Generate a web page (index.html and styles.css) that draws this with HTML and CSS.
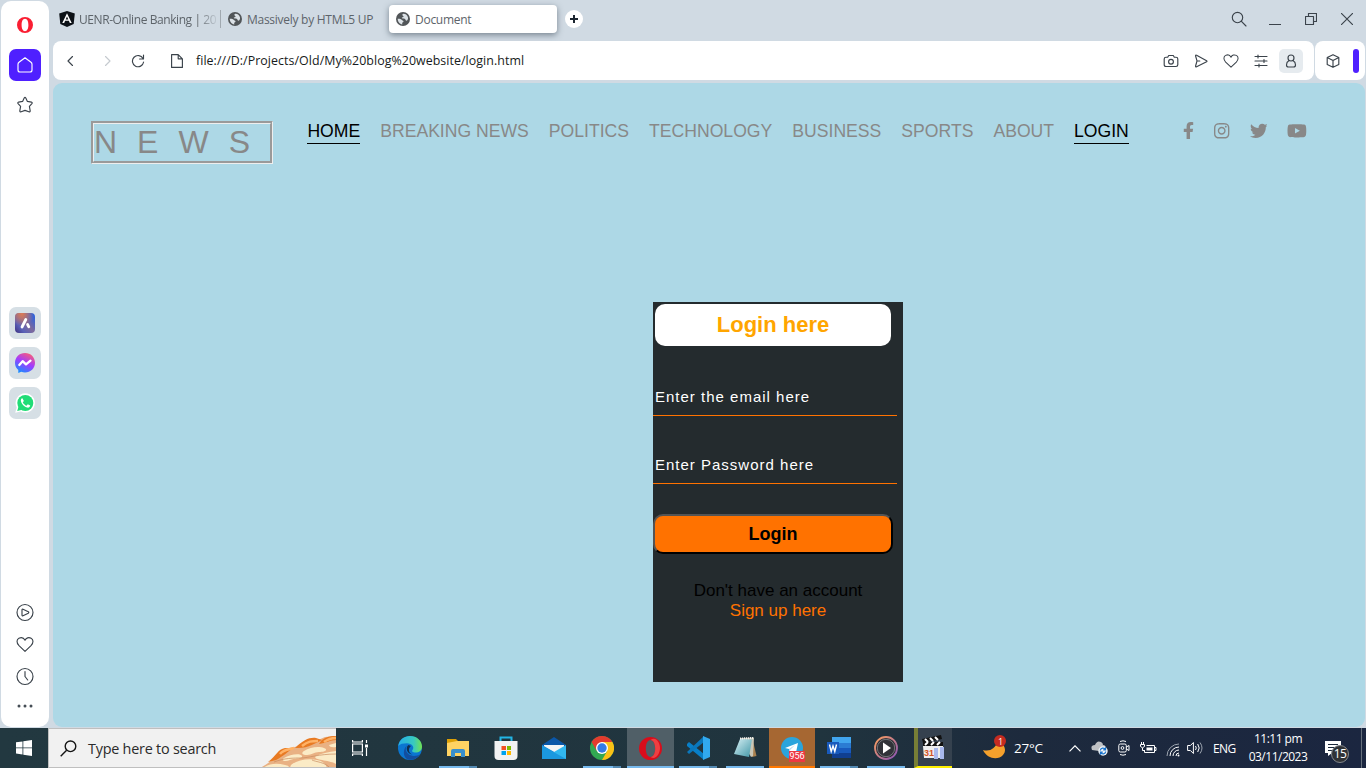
FILE: index.html
```html
<!DOCTYPE html>
<html lang="en">
<head>
<meta charset="utf-8">
<title>Document</title>
<link rel="stylesheet" href="styles.css">
</head>
<body>
<svg class="defs" width="0" height="0" aria-hidden="true">
  <symbol id="globe" viewBox="0 0 14 14"><circle cx="7" cy="7" r="7" fill="#515558"/><path d="M7.200 1.800C6 2.200 6.200 3.600 7.200 3.900c.8.300.2 1.300-.7 1.400-1 .1-.9 1.200.2 1.300 1.500 0 2.700.3 2.900 1.300.3 1.100 1.300.9 1.900.1.500-.8.700-1.700.5-2.600C11.500 3.400 9.700 1.700 7.200 1.800z" fill="#dce2e7"/><path d="M1.700 6.800c1.700-.1 3.500.3 4.300 1.200.6.800 1.700.7 1.500 1.600-.2.800-1 .7-1.300 1.400-.2.600.3 1 .1 1.500C3.600 12.200 1.700 9.800 1.700 6.800z" fill="#dce2e7"/></symbol>
  <symbol id="heart" viewBox="0 0 18 18"><path d="M9 15.900 3 10.200C.2 7.400.6 3.800 2.900 2.700 5.300 1.500 7.800 2.300 9 4.700c1.200-2.400 3.700-3.200 6.100-2C17.400 3.800 17.800 7.400 15 10.200z"/></symbol>
</svg>

<div class="browser">
  <aside class="sidebar">
    <svg class="opera" width="16" height="16" viewBox="0 0 16 16"><path fill="#fa1e32" fill-rule="evenodd" d="M8 0a8 8 0 1 0 0 16A8 8 0 1 0 8 0zm0 1.800c2.300 0 3.400 2.900 3.400 6.200S10.300 14.200 8 14.200 4.600 11.300 4.600 8 5.700 1.800 8 1.800z"/></svg>
    <span class="side-home"><svg class="line" width="18" height="18" viewBox="0 0 18 18"><path d="M9 1.800 3 6.200q-1 .8-1 2V14q0 2 2 2h10q2 0 2-2V8.200q0-1.200-1-2z"/></svg></span>
    <svg class="line star" width="18" height="18" viewBox="0 0 18 18"><path d="M8.200 2q.8-1.200 1.600 0l1.600 3.400 4 .7q1.300.4.500 1.500l-2.500 2.800.8 4.400q0 1.500-1.400 1L9 14.400l-3.800 1.400q-1.400.5-1.400-1l.8-4.400-2.500-2.800q-.8-1.100.5-1.500l4-.7z"/></svg>
    <div class="side-apps">
      <span class="side-app"><svg width="20" height="20" viewBox="0 0 20 20"><defs><linearGradient id="ga" x1="1" y1=".2" x2="0" y2="1"><stop offset="0" stop-color="#2f62dc"/><stop offset=".4" stop-color="#7d6a9d"/><stop offset=".7" stop-color="#5a62b8"/><stop offset="1" stop-color="#3e2f80"/></linearGradient><radialGradient id="gb" cx=".35" cy=".05" r=".6"><stop stop-color="#dc7a54"/><stop offset="1" stop-color="#dc7a54" stop-opacity="0"/></radialGradient></defs><rect width="20" height="20" rx="4" fill="url(#ga)"/><rect width="20" height="20" rx="4" fill="url(#gb)"/><path d="M7 14 10.800 6.500M12.600 11.500l1.200 2.300" stroke="#fff" stroke-width="2.800" stroke-linecap="round"/></svg></span>
      <span class="side-app"><svg width="20" height="20" viewBox="0 0 20 20"><defs><linearGradient id="gm" x1=".3" y1="1" x2=".8" y2="0"><stop offset="0" stop-color="#168dff"/><stop offset=".5" stop-color="#a23cff"/><stop offset="1" stop-color="#ff606e"/></linearGradient></defs><path d="M10 0C4.300 0 0 4.200 0 9.800c0 3 1.300 5.600 3.300 7.300V20l2.900-1.200c1.200.4 2.400.6 3.800.6 5.700 0 10-4 10-9.600S15.700 0 10 0z" fill="url(#gm)"/><path d="m4.300 12 3.300-3.800 3.400 3.200 4.500-3.700" fill="none" stroke="#fff" stroke-width="2.300" stroke-linejoin="round" stroke-linecap="round"/></svg></span>
      <span class="side-app"><svg width="20" height="20" viewBox="0 0 20 20"><path d="M10.300.2a9.700 9.700 0 0 0-8.600 14.300L.2 19.800l5.500-1.300A9.700 9.700 0 1 0 10.300.2z" fill="#fff"/><circle cx="10.300" cy="10" r="8" fill="#20dc76"/><path d="m2.200 18 1.400-4.800 3.600 3.600z" fill="#20dc76"/><path d="M7.400 5.200c-1.200.2-1.800 1.500-1.500 2.900.6 3.100 3.500 6 6.500 6.500 1.500.2 2.700-.7 2.800-2.100l-2.400-1.200-1.300 1.400c-1.700-.6-3-1.900-3.700-3.500l1.100-1.300z" fill="#fff"/></svg></span>
    </div>
    <div class="side-tools">
      <svg class="line" width="18" height="18" viewBox="0 0 18 18"><circle cx="9" cy="9" r="8"/><path d="M6 6.500q0-1 1-.8l5.300 2.600q1 .7 0 1.400L7 12.300q-1 .2-1-.8z"/></svg>
      <svg class="line" width="18" height="18"><use href="#heart"/></svg>
      <svg class="line" width="18" height="18" viewBox="0 0 18 18"><circle cx="9" cy="9" r="8"/><path d="M9 4v5l2.700 3.500"/></svg>
      <svg class="dots" width="18" height="10" viewBox="0 0 18 10"><circle cx="3" cy="5" r="1.500"/><circle cx="9" cy="5" r="1.500"/><circle cx="15" cy="5" r="1.500"/></svg>
    </div>
  </aside>

  <div class="window">
    <div class="tabs">
      <div class="tab tab-first"><svg width="16" height="16" viewBox="0 0 16 16"><path d="M8 0 .2 2.600 1.300 13 8 16l6.700-3 1.100-10.400z" fill="#0c1117"/><path d="M8 2.200 3.300 12h1.900l.9-2.200h3.800l.9 2.200h1.900zm0 3.400 1.300 2.900H6.700z" fill="#fff"/></svg><span class="tab-text fade">UENR-Online Banking | 20</span></div>
      <div class="tab tab-second"><svg width="14" height="14"><use href="#globe"/></svg><span class="tab-text">Massively by HTML5 UP</span></div>
      <div class="tab tab-active"><svg width="14" height="14"><use href="#globe"/></svg><span class="tab-text">Document</span></div>
      <span class="new-tab"><svg width="8" height="8" viewBox="0 0 8 8"><path d="M4 0v8M0 4h8" stroke="#1c2630" stroke-width="2"/></svg></span>
      <div class="window-controls">
        <svg class="line" width="16" height="16" viewBox="0 0 16 16"><circle cx="6.500" cy="6.500" r="5.200"/><path d="m10.200 10.200 4.800 4.800"/></svg>
        <svg class="line" width="12" height="14" viewBox="0 0 12 14"><path d="M0 12.500h12"/></svg>
        <svg class="line" width="12" height="12" viewBox="0 0 12 12"><path d="M.5 3.500h8v8h-8zM3.500 3.500v-3h8v8h-3"/></svg>
        <svg class="line" width="12" height="12" viewBox="0 0 12 12"><path d="m.3.300 11.400 11.400M11.700.3.300 11.700"/></svg>
      </div>
    </div>

    <div class="bars">
      <div class="address">
        <svg class="line back" width="8" height="12" viewBox="0 0 8 12"><path d="M6.500 1.500 2 6l4.500 4.500"/></svg>
        <svg class="line forward" width="8" height="12" viewBox="0 0 8 12"><path d="m1.500 1.500 4.500 4.500-4.500 4.500"/></svg>
        <svg class="line reload" width="14" height="14" viewBox="0 0 14 14"><path d="M12 4.500A5.600 5.600 0 1 0 12.600 8M12.500 1v4H8.600"/></svg>
        <svg class="line file" width="12" height="14" viewBox="0 0 12 14"><path d="M.6.600h6.600l4.200 4.200v8.600H.600zM7.200.600v4.200h4.200"/></svg>
        <span class="url">file:///D:/Projects/Old/My%20blog%20website/login.html</span>
        <div class="actions">
          <svg class="line" width="16" height="16" viewBox="0 0 16 16"><path d="M3 4.200h1.700l1-1.700h4.600l1 1.700H13q1.800 0 1.800 1.800v5.800q0 1.700-1.800 1.700H3q-1.800 0-1.800-1.700V6q0-1.800 1.800-1.800z"/><circle cx="8" cy="8.700" r="2.400"/></svg>
          <svg class="line" width="16" height="16" viewBox="0 0 16 16"><path d="M3.600 2.300q-1.300-.5-1 .7L4 7.800l-1.400 5.200q-.3 1.300 1 .7l10-5q.8-.5 0-1zM4.200 8h2.600"/></svg>
          <svg class="line" width="16" height="16"><use href="#heart"/></svg>
          <svg class="line" width="16" height="16" viewBox="0 0 16 16"><path d="M2 3.500h12M2 8h12M2 12.500h12M5 2v3M11 6.500v3M6 11v3"/></svg>
          <span class="profile"><svg class="line" width="16" height="16" viewBox="0 0 16 16"><circle cx="8" cy="5" r="3"/><path d="M5.800 7.800Q3.500 9 3.500 12q0 2 2 2h5q2 0 2-2 0-3-2.300-4.200"/></svg></span>
        </div>
      </div>
      <div class="extension">
        <svg class="line" width="14" height="14" viewBox="0 0 14 14"><path d="M7 .7 12.800 3.500v7L7 13.300l-5.800-2.800v-7zM1.200 3.500 7 6.400l5.800-2.900M7 6.400v6.900"/></svg>
        <span class="accent"></span>
      </div>
    </div>

    <main class="page">
      <header class="header">
        <div class="brand">NEWS</div>
        <nav class="nav">
          <a class="current">HOME</a><a>BREAKING NEWS</a><a>POLITICS</a><a>TECHNOLOGY</a><a>BUSINESS</a><a>SPORTS</a><a>ABOUT</a><a class="current">LOGIN</a>
        </nav>
        <div class="social">
          <svg class="fb" viewBox="0 0 320 512"><path d="M279.140 288l14.220-92.660h-88.910v-60.130c0-25.350 12.420-50.060 52.240-50.060h40.420V6.260S260.430 0 225.360 0c-73.220 0-121.080 44.380-121.080 124.720v70.620H22.890V288h81.390v224h100.170V288z"/></svg>
          <svg class="ig" viewBox="0 0 448 512"><path d="M224.1 141c-63.6 0-114.9 51.3-114.9 114.9s51.3 114.9 114.9 114.9S339 319.5 339 255.9 287.7 141 224.1 141zm0 189.6c-41.1 0-74.7-33.5-74.7-74.7s33.5-74.7 74.7-74.7 74.7 33.5 74.7 74.7-33.6 74.7-74.7 74.7zm146.400-194.300c0 14.900-12 26.800-26.800 26.800-14.900 0-26.800-12-26.800-26.800s12-26.800 26.800-26.800 26.800 12 26.800 26.800zm76.100 27.200c-1.700-35.900-9.900-67.700-36.200-93.900-26.200-26.200-58-34.400-93.900-36.200-37-2.100-147.900-2.100-184.900 0-35.800 1.700-67.600 9.900-93.900 36.100s-34.400 58-36.200 93.900c-2.100 37-2.100 147.900 0 184.900 1.700 35.900 9.900 67.700 36.200 93.900s58 34.400 93.900 36.200c37 2.100 147.900 2.100 184.900 0 35.900-1.700 67.700-9.900 93.900-36.200 26.200-26.200 34.400-58 36.200-93.900 2.100-37 2.100-147.800 0-184.800zM398.800 388c-7.800 19.600-22.900 34.700-42.600 42.600-29.500 11.700-99.500 9-132.100 9s-102.700 2.600-132.100-9c-19.600-7.800-34.700-22.900-42.600-42.600-11.700-29.500-9-99.500-9-132.100s-2.600-102.700 9-132.100c7.800-19.600 22.900-34.700 42.600-42.600 29.500-11.700 99.500-9 132.100-9s102.700-2.600 132.100 9c19.600 7.800 34.700 22.900 42.600 42.600 11.700 29.500 9 99.500 9 132.100s2.700 102.700-9 132.100z"/></svg>
          <svg class="tw" viewBox="0 0 512 512"><path d="M459.370 151.716c.325 4.548.325 9.097.325 13.645 0 138.720-105.583 298.558-298.558 298.558-59.452 0-114.680-17.219-161.137-47.106 8.447.974 16.568 1.299 25.340 1.299 49.055 0 94.213-16.568 130.274-44.832-46.132-.975-84.792-31.188-98.112-72.772 6.498.974 12.995 1.624 19.818 1.624 9.421 0 18.843-1.300 27.614-3.573-48.081-9.747-84.143-51.980-84.143-102.985v-1.299c13.969 7.797 30.214 12.670 47.431 13.319-28.264-18.843-46.781-51.005-46.781-87.391 0-19.492 5.197-37.360 14.294-52.954 51.655 63.675 129.300 105.258 216.365 109.807-1.624-7.797-2.599-15.918-2.599-24.040 0-57.828 46.782-104.934 104.934-104.934 30.213 0 57.502 12.670 76.670 33.137 23.715-4.548 46.456-13.320 66.599-25.340-7.798 24.366-24.366 44.833-46.132 57.827 21.117-2.273 41.584-8.122 60.426-16.243-14.292 20.791-32.161 39.308-52.628 54.253z"/></svg>
          <svg class="yt" viewBox="0 0 576 512"><path d="M549.655 124.083c-6.281-23.650-24.787-42.276-48.284-48.597C458.781 64 288 64 288 64S117.220 64 74.629 75.486c-23.497 6.322-42.003 24.947-48.284 48.597-11.412 42.867-11.412 132.305-11.412 132.305s0 89.438 11.412 132.305c6.281 23.650 24.787 41.500 48.284 47.821C117.220 448 288 448 288 448s170.780 0 213.371-11.486c23.497-6.321 42.003-24.171 48.284-47.821 11.412-42.867 11.412-132.305 11.412-132.305s0-89.438-11.412-132.305zm-317.510 213.508V175.185l142.739 81.205-142.739 81.201z"/></svg>
        </div>
      </header>
      <form class="login">
        <h2>Login here</h2>
        <input type="email" placeholder="Enter the email here">
        <input type="password" placeholder="Enter Password here">
        <button type="button">Login</button>
        <p>Don't have an account<br><a>Sign up here</a></p>
      </form>
    </main>
  </div>
</div>

<footer class="taskbar">
  <div class="start"><svg width="16" height="16" viewBox="0 0 16 16" fill="#fff"><path d="M0 2.300 6.500 1.400v6.100H0zM7.300 1.300 16 0v7.500H7.300zM0 8.300h6.500v6.200L0 13.600zM7.300 8.300H16V16l-8.700-1.300z"/></svg></div>
  <div class="search">
    <svg class="mag" width="17" height="17" viewBox="0 0 17 17" fill="none" stroke="#151515" stroke-width="1.400"><circle cx="10.500" cy="6.300" r="5.300"/><path d="M6.600 10.200.7 16.200"/></svg>
    <span>Type here to search</span>
    <svg class="pastry" width="76" height="32" viewBox="0 0 76 32"><path d="M0 32C10 27 15 21 19 17l6-4 14-3 11-7 8 1 7-3 11-1v32z" fill="#e9b183"/><path d="M8 26C16 20 18 13 25 12l9 0c-6 3-10 8-18 12zM35 12C43 4 50 1 56 2l6 2C55 7 48 13 35 12zM59 8C63 1 69 0 76 0v4c-6 0-10 3-17 4z" fill="#e87a22"/><path d="M20 18c4-5 8-4 14-6M42 10c6-5 10-5 16-5M64 6c4-3 8-4 12-4" stroke="#ffb266" stroke-width="2.500" fill="none"/><path d="M3 32c7-5 14-5 22-3q5 1 4 3zM24 22c6-4 17-5 18-2s-8 2-12 4-10 1-6-2zM44 15c6-4 15-5 20-3 5 2 0 4-5 4s-7 3-12 3-6-2-3-4zM31 29c6-5 17-7 26-5 8 2 9 5 10 8H33q-4 0-2-3zM56 20c7-3 13-4 20-5v13c-5-4-25-4-20-8zM69 9l7-2v4q-6 1-7-2z" fill="#fbebc6"/><path d="M14 26c10-4 20-4 27-4s18-4 35-4M52 24c4 2 13 2 18 8" fill="none" stroke="#c98b5e" stroke-width=".7"/></svg>
  </div>
  <div class="apps">
    <div class="app view"><svg width="18" height="18" viewBox="0 0 18 18" fill="none" stroke="#fff" stroke-width="1.200"><path d="M1.600 5h9.800v8H1.600zM1.600 1v2h9.800V1M1.600 17v-2h9.800v2M15.500 1v3M15.500 9v8"/><path d="M14 5.500h3v3h-3z" fill="#fff" stroke="none"/></svg></div>
    <div class="app"><svg width="24" height="24" viewBox="0 0 24 24"><defs><linearGradient id="ge"><stop stop-color="#25aee8"/><stop offset=".65" stop-color="#38c9c0"/><stop offset="1" stop-color="#71e251"/></linearGradient></defs><circle cx="12" cy="12" r="12" fill="#0b76d1"/><path d="M.2 10C1.200 3.500 6.200 0 12 0c7 0 12 5 12 10.500 0 4-3 6-6.500 6-2.800 0-4.200-1.300-3-2.500 2.500-3-1-6.700-5.500-6.700C5 7.300 2 8 .2 10z" fill="url(#ge)"/><path d="M10 8.500C5 13 9 20 16 20c2.500 0 4.600-.8 6-1.700C19 23 14 24.500 10 23.500 5 22 4 13 10 8.500z" fill="#124e9f"/><path d="M13 10c-3 2-3 7 1.500 8.500-5.500-.5-7.500-7-4-9.500z" fill="#102f50"/></svg></div>
    <div class="app multi"><svg width="22" height="20" viewBox="0 0 22 20"><path d="M0 1h9l2 2H0z" fill="#dd9b08"/><path d="M0 3h22v15H0z" fill="#ffd363"/><path d="M0 5V1h8l2 2z" fill="#dda006"/><path d="M4 19v-6q0-2 2-2h10q2 0 2 2v6h-4v-4H8v4z" fill="#398fcc"/></svg></div>
    <div class="app"><svg width="24" height="24" viewBox="0 0 24 24"><path d="M6.500 6V1.500h11V6" fill="none" stroke="#22b5e5" stroke-width="2"/><path d="M.5 5h23v15q0 4-4 4h-15q-4 0-4-4z" fill="#f2f2f2"/><path d="M7.500 10H12v4H7.500z" fill="#f25022"/><path d="M13 10h4v4h-4z" fill="#7fba00"/><path d="M7.500 15H12v4H7.500z" fill="#00a4ef"/><path d="M13 15h4v4h-4z" fill="#ffb900"/></svg></div>
    <div class="app"><svg width="24" height="24" viewBox="0 0 24 24"><path d="M0 9 12 1l12 8v3H0z" fill="#0b57a8"/><path d="M2 9h20v7H2z" fill="#f4f4f4"/><path d="M0 9l14 8-14 6z" fill="#1689d6"/><path d="M24 9v14H0z" fill="#32b8f0"/><path d="M0 9.500 24 23H0z" fill="#1b98df"/></svg></div>
    <div class="app multi"><svg width="24" height="24" viewBox="0 0 24 24"><circle cx="12" cy="12" r="12" fill="#32a852"/><path d="M1.600 6A12 12 0 0 1 22.400 6H12l-5.200 9z" fill="#e33b2e"/><path d="M22.400 6A12 12 0 0 1 12 24l5.200-9L12 6z" fill="#fbc116"/><circle cx="12" cy="12" r="6" fill="#fff"/><circle cx="12" cy="12" r="4.700" fill="#347be5"/></svg></div>
    <div class="app narrow selected"><svg width="23" height="23" viewBox="0 0 23 23"><path fill="#d90d1b" fill-rule="evenodd" d="M11.500 0a11.500 11.500 0 1 0 0 23 11.500 11.500 0 0 0 0-23zm0 3c3 0 4.700 4 4.700 8.500S14.500 20 11.500 20s-4.700-4-4.700-8.500S8.500 3 11.500 3z"/><path d="M11.500 3c5-4 9.500 2 9.500 8s-4.500 12.500-9.500 9c3 0 4.700-4 4.700-8.500S14.500 3 11.500 3z" fill="#ee3f42"/></svg></div>
    <div class="app narrow multi"><svg width="24" height="24" viewBox="0 0 24 24"><path d="M1 8 3 6l15 12v6L1 10z" fill="#087fc8"/><path d="M1 16 18 0v6L3 18z" fill="#0a77bb"/><path d="m17 0 7 3v18l-7 3z" fill="#31a9ef"/></svg></div>
    <div class="app narrow running"><svg width="24" height="24" viewBox="0 0 24 24"><defs><linearGradient id="gn" x2="1" y2="1"><stop stop-color="#d9f1f5"/><stop offset="1" stop-color="#3f96a6"/></linearGradient></defs><path d="m20 5 3.500 15-4.500 1z" fill="#a8804f"/><path d="M7 2 21 1.500 20 20l-2 1z" fill="#c9c7b8"/><path d="m7 3 12 .5L16 21 1 18z" fill="url(#gn)"/><path d="m7 2.500 13-.5" stroke="#eee" stroke-width="2" stroke-dasharray="1"/></svg></div>
    <div class="app telegram"><svg width="22" height="22" viewBox="0 0 22 22"><circle cx="11" cy="11" r="11" fill="#2ba4dc"/><path d="m4 11 13-5-2.300 11-4-3-2 2-.6-4z" fill="#fff"/><path d="m8 12 6-4-5 5-.3 3z" fill="#b8d7e9"/></svg><span class="unread">956</span></div>
    <div class="app narrow multi"><svg width="24" height="22" viewBox="0 0 24 22"><path d="M5 0h19v6H5z" fill="#41a5ee"/><path d="M5 6h19v5H5z" fill="#2b7cd3"/><path d="M5 11h19v5H5z" fill="#185abd"/><path d="M5 16h19v5H5z" fill="#103f91"/><path d="M0 5h12v12H0z" fill="#185abd"/><path d="m2.500 7.500 1.700 7L6 9l1.800 5.500 1.700-7" fill="none" stroke="#fff" stroke-width="1.400"/></svg></div>
    <div class="app narrow running"><svg width="24" height="24" viewBox="0 0 24 24"><defs><linearGradient id="gp" x2="1" y2="1"><stop stop-color="#ffa15e"/><stop offset="1" stop-color="#8653b5"/></linearGradient></defs><circle cx="12" cy="12" r="11" fill="#2b2d33" stroke="url(#gp)" stroke-width="1.800"/><circle cx="12" cy="12" r="8.700" fill="#303238" stroke="#85878b" stroke-width=".8"/><path d="m9 6.500 8 5.500-8 5.500z" fill="#fff"/></svg></div>
    <div class="app clapper"><svg width="24" height="25" viewBox="0 0 24 25"><path d="M1 11h20v12H2z" fill="#eee"/><path d="m0 4 19-4 1 4L1 8zM1 7h20v4H1z" fill="#111"/><path d="m3 4 3 3M8 3l3 3M13 2l3 3M3 10l3-3M9 10l3-3M15 10l3-3" stroke="#fff" stroke-width="2"/><text x="2" y="21" class="clap-text">31</text><path d="M12 13h4v11h-4zM18 12h4v12h-4z" fill="#a9b9ed"/></svg></div>
  </div>
  <div class="tray">
    <svg class="moon" width="23" height="25" viewBox="0 0 23 25"><path d="M0 15c7 2 13-2 14-8 8 1 10 9 6 13-5 5.500-16 4-20-5z" fill="#f6a12c"/><circle cx="17" cy="6" r="6" fill="#c62b20"/><text x="15" y="9.500" class="moon-text">1</text></svg>
    <span class="temp">27°C</span>
    <svg class="caret" width="12" height="7" viewBox="0 0 12 7" fill="none" stroke="#fff" stroke-width="1.200"><path d="m.5 6.300 5.500-5.500 5.500 5.500"/></svg>
    <svg class="cloud" width="17" height="16" viewBox="0 0 17 16"><path d="M1 10Q-1 5 4 5q2-5 6-3 2 1 2 3 3 0 3 4L8 11z" fill="#bfc1c4"/><circle cx="12" cy="11" r="4.700" fill="#f3f6f8"/><path d="M9.300 10.500a2.700 2.700 0 0 1 5-1M14.700 11.500a2.700 2.700 0 0 1-5 1M14.500 7.300v2.500h-2.300M9.500 14.700v-2.500h2.300" fill="none" stroke="#1672cd" stroke-width="1.300"/></svg>
    <svg class="meet" width="12" height="16" viewBox="0 0 12 16" fill="none" stroke="#fff"><rect x=".8" y="4" width="7.500" height="8" rx="1.500"/><path d="M8.300 7 11 5.500v5L8.300 9M2 1.500q3-1.400 6 0M2 14.500q3 1.400 6 0"/><circle cx="4.500" cy="8" r="1.400"/></svg>
    <svg class="battery" width="17" height="13" viewBox="0 0 17 13" fill="none" stroke="#fff"><path d="M6.500 3.500h8v7h-10V8M14.500 5.500H16v3h-1.500M.5 2.500h4v2q-2 2.500-4 0zM1.500 2.500V0M3.500 2.500V0M2.500 6v2.500h2"/><path d="M6.500 5.500h6v3h-6z" fill="#fff" stroke="none"/></svg>
    <svg class="wifi" width="14" height="14" viewBox="0 0 14 14" fill="none"><path d="M1 13A12 12 0 0 1 13 1" stroke="#9ba3ae"/><path d="M4 13a9 9 0 0 1 9-9M7 13a6 6 0 0 1 6-6M10 13a3 3 0 0 1 3-3" stroke="#fff"/><circle cx="12.500" cy="12.500" r="1" fill="#fff"/></svg>
    <svg class="speaker" width="16" height="14" viewBox="0 0 16 14" fill="none" stroke="#fff"><path d="M.6 4.500h2.800l3-3v11l-3-3H.600zM8.500 5q1.500 2 0 4M10.700 3q3 4 0 8"/><path d="M13 1.500q4 5.500 0 11" stroke="#9ba3ae"/></svg>
    <span class="lang">ENG</span>
    <div class="clock"><span>11:11 pm</span><span>03/11/2023</span></div>
    <div class="notify"><svg width="17" height="15" viewBox="0 0 17 15"><path d="M0 0h16v12H7l-4 3v-3H0z" fill="#fff"/><path d="M3 3.500h10M3 6.500h10M3 9.500h6" stroke="#1c2a3c"/></svg><span class="count">15</span></div>
    <span class="desktop-edge"></span>
  </div>
</footer>
</body>
</html>
```

FILE: styles.css
```css
* { box-sizing: border-box; }
body { margin: 0; width: 1366px; height: 768px; overflow: hidden; background: #d0dae3; font-family: "Open Sans", "Noto Sans", sans-serif; }
svg { display: block; flex: none; }
.defs { position: absolute; }
.line { fill: none; stroke: #3b434b; stroke-width: 1.15; stroke-linejoin: round; stroke-linecap: round; }
.browser { display: flex; height: 728px; gap: 4px; padding: 1px; }

.sidebar { width: 48px; background: #fff; border-radius: 10px; display: flex; flex-direction: column; align-items: center; padding-top: 16px; }
.side-home { width: 32px; height: 32px; margin-top: 16px; border-radius: 7px; background: #4f20ff; display: grid; place-items: center; }
.side-home .line { stroke: #fff; }
.star { margin-top: 15px; }
.side-apps { margin-top: 193px; display: grid; gap: 8px; }
.side-app { width: 32px; height: 32px; border-radius: 7px; background: #d6dfe5; display: grid; place-items: center; }
.side-tools { margin: auto 1px 0 0; padding-bottom: 16px; display: grid; gap: 14px; }
.side-tools .line { transform: translateY(-.5px); }
.side-tools .dots { margin-top: 1px; fill: #454d55; }

.window { width: 1312px; display: flex; flex-direction: column; }
.tabs { height: 40px; display: flex; align-items: flex-start; padding-top: 4px; }
.tab { height: 28px; display: flex; align-items: center; gap: 5px; font-size: 12px; color: #5d646a; white-space: nowrap; }
.tab-first { width: 168px; padding-left: 6px; gap: 4px; }
.tab-first::after { content: ""; flex: none; width: 1px; height: 18px; background: #a1a9b0; }
.tab-second { width: 168px; padding-left: 7px; }
.tab-active { width: 168px; padding-left: 7px; background: #fff; border-radius: 4px; box-shadow: 0 2px 6px rgba(45, 60, 75, .55); }
.tab-text { letter-spacing: -.27px; }
.fade { flex: none; width: 137px; letter-spacing: -.42px; -webkit-mask-image: linear-gradient(90deg, #000 118px, rgba(0, 0, 0, .15) 137px); }
.new-tab { width: 18px; height: 18px; margin: 5px 0 0 8px; border-radius: 50%; background: #fff; display: grid; place-items: center; }
.window-controls { margin: 6px 12px 0 auto; display: flex; align-items: center; gap: 24px; }
.window-controls svg:first-child { margin-right: -2px; }

.bars { height: 39px; display: flex; gap: 1px; }
.address { width: 1261px; background: #fff; border-radius: 8px; display: flex; align-items: center; padding: 0 11px 0 13px; }
.extension { width: 50px; background: #fff; border-radius: 8px; display: flex; align-items: center; padding-left: 11px; }
.accent { width: 6px; height: 24px; margin-left: 13px; border-radius: 3px; background: #4f20ff; }
.forward { margin-left: 30px; }
.forward.line { stroke: #c5cacf; }
.reload { margin-left: 19px; }
.file { margin-left: 26px; }
.url { margin-left: 13px; font-size: 12.4px; letter-spacing: .06px; color: #171b20; white-space: nowrap; }
.actions { margin-left: auto; display: flex; align-items: center; gap: 14px; }
.profile { width: 24px; height: 24px; margin-left: -4px; border-radius: 5px; background: #e6ebef; display: grid; place-items: center; }

.page { height: 644px; margin-top: 3px; background: #add8e6; border-radius: 9px; font-family: "Liberation Sans", Arial, sans-serif; }
.header { height: 219px; padding: 38px 0 0 38px; display: flex; align-items: flex-start; }
.brand { width: 182px; height: 43px; border: 3px groove #eee; color: #888; font-size: 32px; line-height: 37px; letter-spacing: 20px; white-space: nowrap; overflow: hidden; }
.nav { margin-left: 34.4px; display: flex; gap: 20.05px; }
.nav a { font-size: 17.6px; line-height: 20px; color: #888; padding-bottom: 2px; border-bottom: 1px solid transparent; white-space: nowrap; }
.nav .current { color: #000; border-color: #000; }
.social { margin-left: auto; padding: .5px 58px 0 0; display: flex; align-items: center; }
.social svg { height: 17.6px; fill: #888; }
.fb { width: 11px; }
.ig { width: 15.4px; margin-left: 20px; }
.tw { width: 17.6px; margin-left: 20px; }
.yt { width: 19.8px; margin-left: 20px; }

.login { width: 250px; height: 380px; margin-left: 600px; padding-top: 2px; background: #242b2e; display: flex; flex-direction: column; align-items: flex-start; }
.login h2 { width: 236px; height: 42px; margin: 0 0 0 2px; border-radius: 10px; background: #fff; color: #ffa500; font-size: 22px; line-height: 41px; text-align: center; }
.login input { width: 244px; height: 35px; margin-top: 33px; padding: 1px 2px 5px; border: 0; border-bottom: 1px solid #ff7200; background: transparent; color: #fff; font: 15px "Liberation Sans", Arial, sans-serif; letter-spacing: 1px; }
.login h2 + input { margin-top: 35px; }
.login input::placeholder { color: #fff; }
.login button { width: 240px; height: 40px; margin-top: 30px; padding: 0; border: 2px outset #000; border-radius: 10px; background: #ff7200; color: #000; font: bold 18px "Liberation Sans", Arial, sans-serif; }
.login p { width: 250px; margin: 27px 0 0; color: #000; font-size: 17px; line-height: 20px; text-align: center; }
.login p a { color: #ff7200; }

.taskbar { height: 40px; display: flex; color: #fff; background: linear-gradient(90deg, #223840 0%, #20343e 60%, #1d2a3d 75%, #1b2640 100%); }
.start { width: 48px; display: grid; place-items: center; }
.search { width: 288px; height: 40px; border: 1px solid #bfbfbf; border-right: 0; background: #f1f1f1; display: flex; align-items: center; color: #2b2b2b; font-size: 14.4px; letter-spacing: -.23px; overflow: hidden; white-space: nowrap; }
.mag { margin-left: 11px; }
.search span { margin-left: 11px; }
.pastry { margin-left: auto; margin-top: 7px; }
.apps { width: 616px; display: flex; }
.app { width: 48px; height: 40px; position: relative; display: grid; place-items: center; flex: none; }
.narrow { width: 47px; }
.view { margin-right: 2px; }
.multi::before { content: ""; position: absolute; left: 5px; bottom: 0; width: 30px; height: 2px; background: #76b9ed; }
.multi::after { content: ""; position: absolute; left: 35px; bottom: 0; width: 8px; height: 2px; background: #5389b2; }
.running::before { content: ""; position: absolute; left: 5px; bottom: 0; width: 38px; height: 2px; background: #76b9ed; }
.selected { margin-left: 1px; background: #505f67; border-bottom: 2px solid #76b9ed; padding-top: 2px; }
.app.telegram { width: 46px; margin-left: 1px; background: #a66732; border-bottom: 2px solid #ff7800; padding-top: 2px; }
.unread { position: absolute; left: 20px; top: 23px; width: 16px; height: 11px; background: #ed3841; font: 9px/11px Roboto, sans-serif; text-align: center; }
.clapper { width: 38px; margin-left: 5px; background: #35414e; border-left: 4px solid #777e36; border-bottom: 2px solid #fff000; }
.clapper svg { margin-left: -3px; }
.clap-text { font: bold 9px "Liberation Sans", sans-serif; fill: #d45322; }
.tray { flex: 1; display: flex; align-items: center; font-size: 12px; white-space: nowrap; }
.moon { margin-left: 31px; margin-top: -2px; }
.moon-text { font: 9px "Open Sans", sans-serif; fill: #fff; }
.temp { width: 30px; margin-left: 8px; font-size: 13.5px; letter-spacing: -.2px; }
.caret { margin-left: 25px; }
.cloud { margin-left: 10px; }
.meet { margin-left: 10px; }
.battery { margin-left: 10px; }
.wifi { margin-left: 9px; margin-top: 3px; }
.speaker { margin-left: 7px; }
.lang { width: 24px; margin-left: 10px; font-size: 12px; letter-spacing: -.6px; }
.clock { width: 62px; margin-left: 10px; display: flex; flex-direction: column; align-items: center; font-size: 12px; line-height: 18px; letter-spacing: -.5px; padding-bottom: 1px; }
.notify { position: relative; width: 25px; margin-left: 16px; }
.count { position: absolute; left: 6px; top: 4px; width: 18px; height: 18px; border: 1px solid #85898d; border-radius: 50%; background: #303236; font-size: 12px; line-height: 15px; text-align: center; letter-spacing: -.5px; }
.desktop-edge { width: 1px; height: 40px; margin-left: 11px; background: #66707c; }
```
